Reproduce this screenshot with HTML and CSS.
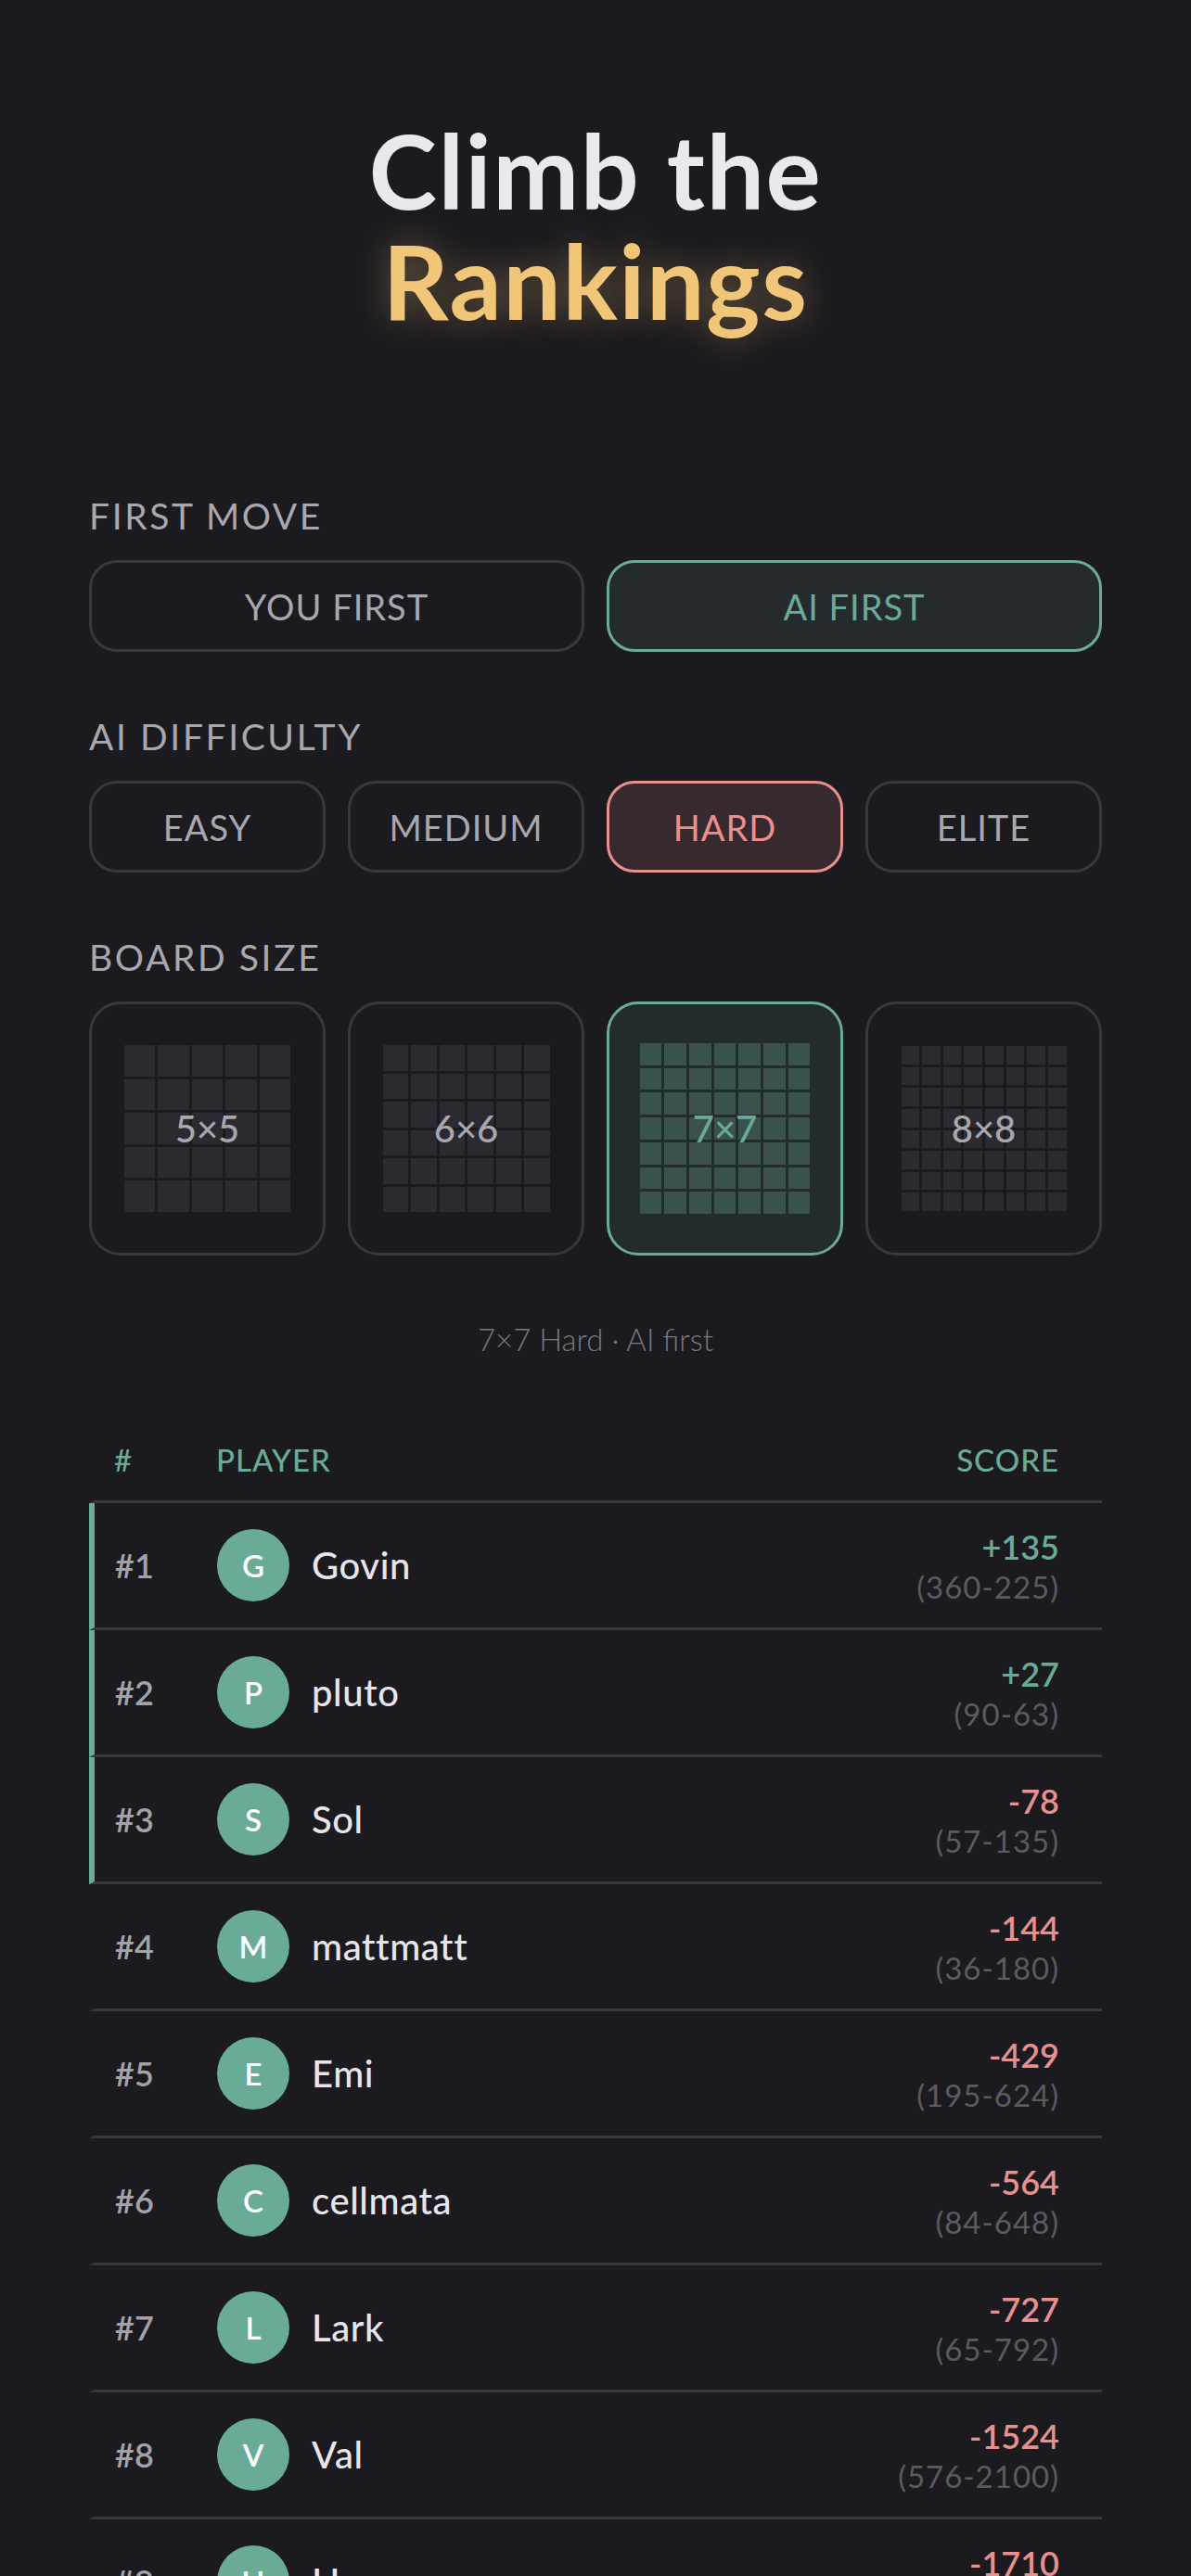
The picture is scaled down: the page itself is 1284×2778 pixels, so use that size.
FILE: index.html
```html
<!DOCTYPE html>
<html lang="en">
<head>
<meta charset="utf-8">
<title>Climb the Rankings</title>
<link rel="stylesheet" href="styles.css">
</head>
<body>
<main class="page">
  <h1 class="title">Climb the<span class="accent">Rankings</span></h1>

  <section class="group first">
    <div class="label">FIRST MOVE</div>
    <div class="options">
      <div class="opt">YOU FIRST</div>
      <div class="opt on-green">AI FIRST</div>
    </div>
  </section>

  <section class="group">
    <div class="label">AI DIFFICULTY</div>
    <div class="options">
      <div class="opt">EASY</div>
      <div class="opt">MEDIUM</div>
      <div class="opt on-red">HARD</div>
      <div class="opt">ELITE</div>
    </div>
  </section>

  <section class="group">
    <div class="label">BOARD SIZE</div>
    <div class="tiles">
      <div class="tile">
        <div class="board n5"><span></span><span></span><span></span><span></span><span></span><span></span><span></span><span></span><span></span><span></span><span></span><span></span><span></span><span></span><span></span><span></span><span></span><span></span><span></span><span></span><span></span><span></span><span></span><span></span><span></span></div>
        <div class="size">5×5</div>
      </div>
      <div class="tile">
        <div class="board n6"><span></span><span></span><span></span><span></span><span></span><span></span><span></span><span></span><span></span><span></span><span></span><span></span><span></span><span></span><span></span><span></span><span></span><span></span><span></span><span></span><span></span><span></span><span></span><span></span><span></span><span></span><span></span><span></span><span></span><span></span><span></span><span></span><span></span><span></span><span></span><span></span></div>
        <div class="size">6×6</div>
      </div>
      <div class="tile active">
        <div class="board n7"><span></span><span></span><span></span><span></span><span></span><span></span><span></span><span></span><span></span><span></span><span></span><span></span><span></span><span></span><span></span><span></span><span></span><span></span><span></span><span></span><span></span><span></span><span></span><span></span><span></span><span></span><span></span><span></span><span></span><span></span><span></span><span></span><span></span><span></span><span></span><span></span><span></span><span></span><span></span><span></span><span></span><span></span><span></span><span></span><span></span><span></span><span></span><span></span><span></span></div>
        <div class="size">7×7</div>
      </div>
      <div class="tile">
        <div class="board n8"><span></span><span></span><span></span><span></span><span></span><span></span><span></span><span></span><span></span><span></span><span></span><span></span><span></span><span></span><span></span><span></span><span></span><span></span><span></span><span></span><span></span><span></span><span></span><span></span><span></span><span></span><span></span><span></span><span></span><span></span><span></span><span></span><span></span><span></span><span></span><span></span><span></span><span></span><span></span><span></span><span></span><span></span><span></span><span></span><span></span><span></span><span></span><span></span><span></span><span></span><span></span><span></span><span></span><span></span><span></span><span></span><span></span><span></span><span></span><span></span><span></span><span></span><span></span><span></span></div>
        <div class="size">8×8</div>
      </div>
    </div>
  </section>

  <p class="caption">7×7 Hard · AI first</p>

  <section class="board-table">
    <div class="thead">
      <div class="c-rank">#</div>
      <div class="c-player">PLAYER</div>
      <div class="c-score">SCORE</div>
    </div>

    <div class="row top">
      <div class="c-rank rank">#1</div>
      <div class="c-player"><span class="avatar">G</span><span class="name">Govin</span></div>
      <div class="c-score"><div class="pts pos">+135</div><div class="rec">(360-225)</div></div>
    </div>
    <div class="row top">
      <div class="c-rank rank">#2</div>
      <div class="c-player"><span class="avatar">P</span><span class="name">pluto</span></div>
      <div class="c-score"><div class="pts pos">+27</div><div class="rec">(90-63)</div></div>
    </div>
    <div class="row top">
      <div class="c-rank rank">#3</div>
      <div class="c-player"><span class="avatar">S</span><span class="name">Sol</span></div>
      <div class="c-score"><div class="pts neg">-78</div><div class="rec">(57-135)</div></div>
    </div>
    <div class="row">
      <div class="c-rank rank">#4</div>
      <div class="c-player"><span class="avatar">M</span><span class="name">mattmatt</span></div>
      <div class="c-score"><div class="pts neg">-144</div><div class="rec">(36-180)</div></div>
    </div>
    <div class="row">
      <div class="c-rank rank">#5</div>
      <div class="c-player"><span class="avatar">E</span><span class="name">Emi</span></div>
      <div class="c-score"><div class="pts neg">-429</div><div class="rec">(195-624)</div></div>
    </div>
    <div class="row">
      <div class="c-rank rank">#6</div>
      <div class="c-player"><span class="avatar">C</span><span class="name">cellmata</span></div>
      <div class="c-score"><div class="pts neg">-564</div><div class="rec">(84-648)</div></div>
    </div>
    <div class="row">
      <div class="c-rank rank">#7</div>
      <div class="c-player"><span class="avatar">L</span><span class="name">Lark</span></div>
      <div class="c-score"><div class="pts neg">-727</div><div class="rec">(65-792)</div></div>
    </div>
    <div class="row">
      <div class="c-rank rank">#8</div>
      <div class="c-player"><span class="avatar">V</span><span class="name">Val</span></div>
      <div class="c-score"><div class="pts neg">-1524</div><div class="rec">(576-2100)</div></div>
    </div>
    <div class="row">
      <div class="c-rank rank">#9</div>
      <div class="c-player"><span class="avatar">H</span><span class="name">Homer</span></div>
      <div class="c-score"><div class="pts neg">-1710</div><div class="rec">(402-2112)</div></div>
    </div>
  </section>
</main>
</body>
</html>
```

FILE: styles.css
```css
* {
  box-sizing: border-box;
  margin: 0;
  padding: 0;
}

html, body {
  background: #1b1a1f;
}

body {
  font-family: Lato, "Noto Sans", sans-serif;
  color: #a9a7ae;
  overflow: hidden;
}

.page {
  padding: 124px 96px 0;
}

.title {
  text-align: center;
  font-size: 111px;
  line-height: 119px;
  font-weight: 700;
  letter-spacing: 1.5px;
  color: #e9e8ee;
}

.title .accent {
  display: block;
  color: #f2c678;
  text-shadow: 0 0 36px rgba(242, 198, 120, 0.38);
}

.group {
  margin-top: 67px;
}

.group.first {
  margin-top: 170px;
}

.label {
  font-size: 39px;
  line-height: 48px;
  letter-spacing: 2.6px;
  color: #a9a7ae;
}

.options {
  display: flex;
  gap: 24px;
  margin-top: 24px;
}

.opt {
  flex: 1;
  height: 99px;
  border: 3px solid #38373d;
  border-radius: 30px;
  display: flex;
  align-items: center;
  justify-content: center;
  font-size: 38px;
  letter-spacing: 1px;
  color: #a9a7ae;
}

.opt.on-green {
  border-color: #6aab98;
  background: #252b2c;
  color: #6aab98;
}

.opt.on-red {
  border-color: #e8908e;
  background: #372a2e;
  color: #ec8f8b;
}

.tiles {
  display: flex;
  gap: 24px;
  margin-top: 24px;
}

.tile {
  flex: 1;
  height: 274px;
  border: 3px solid #38373d;
  border-radius: 34px;
  display: grid;
  place-items: center;
}

.tile > * {
  grid-area: 1 / 1;
}

.board {
  width: 180px;
  height: 180px;
  display: grid;
  gap: 3px;
}

.board span {
  background: #2b2a30;
}

.n5 { grid-template-columns: repeat(5, 1fr); grid-template-rows: repeat(5, 1fr); }
.n6 { grid-template-columns: repeat(6, 1fr); grid-template-rows: repeat(6, 1fr); }
.n7 { grid-template-columns: repeat(7, 1fr); grid-template-rows: repeat(7, 1fr); width: 184px; height: 184px; }
.n8 { grid-template-columns: repeat(8, 1fr); grid-template-rows: repeat(8, 1fr); width: 178px; height: 178px; }

.size {
  font-size: 40px;
  font-weight: 500;
  color: #a9a7ae;
}

.tile.active {
  border-color: #6aab98;
  background: #242b2c;
}

.tile.active .board span {
  background: #3a524d;
}

.tile.active .size {
  color: #6aab98;
}

.caption {
  margin-top: 70px;
  text-align: center;
  font-size: 33px;
  line-height: 40px;
  font-weight: 300;
  color: #79787e;
}

.board-table {
  margin-top: 90px;
}

.thead,
.row {
  display: flex;
  align-items: center;
  border-left: 6px solid transparent;
  padding: 0 46px 0 22px;
}

.thead {
  height: 67px;
  align-items: flex-start;
  border-bottom: 3px solid #38373d;
  font-size: 33px;
  line-height: 40px;
  font-weight: 500;
  letter-spacing: 1px;
  color: #6aab98;
}

.thead .c-rank {
  margin-left: -1px;
}

.row {
  height: 137px;
  border-bottom: 3px solid #38373d;
}

.row.top {
  border-left-color: #6aab98;
}

.c-rank {
  width: 110px;
  flex: none;
}

.c-player {
  flex: 1;
  display: flex;
  align-items: center;
  gap: 24px;
}

.c-score {
  text-align: right;
}

.rank {
  font-size: 36px;
  font-weight: 600;
  color: #a4a2a9;
}

.avatar {
  width: 78px;
  height: 78px;
  border-radius: 50%;
  background: #6aab98;
  color: #ffffff;
  display: flex;
  align-items: center;
  justify-content: center;
  font-size: 33px;
  font-weight: 600;
}

.name {
  font-size: 40px;
  font-weight: 500;
  letter-spacing: 0.6px;
  color: #e6e5ea;
}

.pts {
  font-size: 36px;
  line-height: 46px;
  font-weight: 600;
}

.pts.pos { color: #6aab98; }
.pts.neg { color: #e8908e; }

.rec {
  font-size: 33px;
  line-height: 41px;
  letter-spacing: 1px;
  color: #5b5a60;
}
```
